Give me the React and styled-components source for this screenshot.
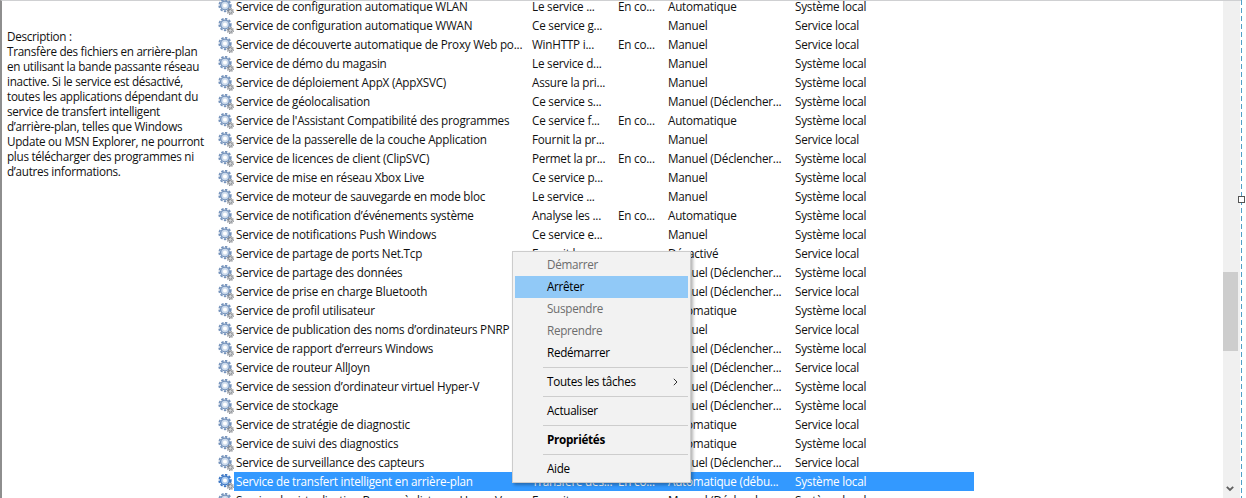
import React from 'react';
import styled, { createGlobalStyle } from 'styled-components';

const GlobalStyle = createGlobalStyle`
  html, body {
    margin: 0;
    padding: 0;
    background: #fff;
    overflow: hidden;
  }
  body {
    font-family: "Open Sans", "Noto Sans", sans-serif;
    font-size: 11.7px;
    letter-spacing: -0.22px;
    color: #111;
  }
`;

const Page = styled.div`
  position: relative;
  display: flex;
  width: 1246px;
  height: 498px;
  overflow: hidden;
  background: #fff;
`;

const Window = styled.div`
  flex: 1;
  display: flex;
  min-width: 0;
  border-top: 1px solid #cfd0d2;
  border-left: 2px solid #8e8e8e;
`;

const Description = styled.aside`
  width: 207px;
  flex-shrink: 0;
  padding: 28px 4px 0 5px;
  line-height: 15px;
  letter-spacing: -0.29px;
`;

const List = styled.div`
  flex: 1;
  min-width: 0;
  margin-top: -4px;
`;

const Row = styled.div`
  display: flex;
  height: 19px;
  align-items: center;
`;

const Cells = styled.div`
  display: grid;
  grid-template-columns: 296px 86px 50px 127px 179px;
  width: 738px;
  height: 19px;
  line-height: 19px;
  padding-left: 2px;
  white-space: nowrap;
  background: ${p => (p.$selected ? '#3399ff' : 'transparent')};
  color: ${p => (p.$selected ? '#fff' : '#111')};
`;

const GearSvg = styled.svg`
  width: 16px;
  height: 16px;
  flex-shrink: 0;
`;

const ServiceIcon = ({ selected }) => {
  const main = selected ? '#3b76c4' : '#7492bb';
  const inner = selected ? '#a9c9ee' : '#c9d8ea';
  return (
    <GearSvg viewBox="0 0 16 16">
      <circle cx="7" cy="6.5" r="5.8" fill="none" stroke={main} strokeWidth="1.7" strokeDasharray="2.4 1.4" />
      <circle cx="7" cy="6.5" r="4.4" fill={inner} stroke={main} strokeWidth="1.4" />
      <circle cx="7" cy="6.5" r="2" fill="#fff" />
      <circle cx="12.4" cy="12.4" r="3" fill="none" stroke="#84888d" strokeWidth="1.2" strokeDasharray="1.3 1" />
      <circle cx="12.4" cy="12.4" r="1.9" fill="#d0d3d7" stroke="#777b80" strokeWidth="0.9" />
    </GearSvg>
  );
};

const Scrollbar = styled.div`
  position: relative;
  width: 17px;
  flex-shrink: 0;
  margin-right: 1px;
  padding-top: 271px;
  box-sizing: border-box;
  background: #f0f0f0;
`;

const Thumb = styled.div`
  width: 15px;
  height: 79px;
  background: #cdcdcd;
`;

const ScrollArrow = styled.svg`
  position: absolute;
  left: 3px;
  bottom: 6px;
  width: 8px;
  height: 6px;
`;

const SelectionEdge = styled.div`
  position: relative;
  width: 1px;
  margin-right: 4px;
  flex-shrink: 0;
  background: repeating-linear-gradient(#4f9fc8 0 5px, transparent 5px 8px);
`;

const Handle = styled.div`
  position: absolute;
  left: -3px;
  top: 196px;
  width: 5px;
  height: 5px;
  background: #fff;
  border: 1px solid #555;
`;

const Menu = styled.div`
  position: absolute;
  left: 512px;
  top: 251px;
  width: 179px;
  box-sizing: border-box;
  padding: 2px;
  background: #f2f2f2;
  border: 1px solid #cccccc;
  box-shadow: 2px 2px 3px rgba(0, 0, 0, 0.3);
  letter-spacing: -0.29px;
`;

const MenuItem = styled.div`
  position: relative;
  height: 22px;
  line-height: 21px;
  padding-left: 32px;
  background: ${p => (p.$hover ? '#91c9f7' : 'transparent')};
  color: ${p => (p.$disabled ? '#6d6d6d' : '#000')};
  font-weight: ${p => (p.$bold ? 700 : 400)};
`;

const Separator = styled.div`
  height: 1px;
  margin: 3px 0 3px 28px;
  background: #cdcdcd;
`;

const SubArrow = styled.svg`
  position: absolute;
  right: 10px;
  top: 7px;
  width: 5px;
  height: 8px;
`;

const LS = 'Service local';
const SL = 'Système local';
const MD = 'Manuel (Déclencher...';
const EC = 'En co...';

const services = [
  ['Service de configuration automatique WLAN', 'Le service ...', EC, 'Automatique', SL],
  ['Service de configuration automatique WWAN', 'Ce service g...', '', 'Manuel', LS],
  ['Service de découverte automatique de Proxy Web po...', 'WinHTTP i...', EC, 'Manuel', LS],
  ['Service de démo du magasin', 'Le service d...', '', 'Manuel', SL],
  ['Service de déploiement AppX (AppXSVC)', 'Assure la pri...', '', 'Manuel', SL],
  ['Service de géolocalisation', 'Ce service s...', '', MD, SL],
  ["Service de l'Assistant Compatibilité des programmes", 'Ce service f...', EC, 'Automatique', SL],
  ['Service de la passerelle de la couche Application', 'Fournit la pr...', '', 'Manuel', LS],
  ['Service de licences de client (ClipSVC)', 'Permet la pr...', EC, MD, SL],
  ['Service de mise en réseau Xbox Live', 'Ce service p...', '', 'Manuel', SL],
  ['Service de moteur de sauvegarde en mode bloc', 'Le service ...', '', 'Manuel', SL],
  ['Service de notification d’événements système', 'Analyse les ...', EC, 'Automatique', SL],
  ['Service de notifications Push Windows', 'Ce service e...', '', 'Manuel', SL],
  ['Service de partage de ports Net.Tcp', 'Fournit la...', '', 'Désactivé', LS],
  ['Service de partage des données', '', '', MD, SL],
  ['Service de prise en charge Bluetooth', '', '', MD, LS],
  ['Service de profil utilisateur', '', '', 'Automatique', SL],
  ['Service de publication des noms d’ordinateurs PNRP', '', '', 'Manuel', LS],
  ['Service de rapport d’erreurs Windows', '', '', MD, SL],
  ['Service de routeur AllJoyn', '', '', MD, LS],
  ['Service de session d’ordinateur virtuel Hyper-V', '', '', MD, SL],
  ['Service de stockage', '', '', MD, SL],
  ['Service de stratégie de diagnostic', '', '', 'Automatique', LS],
  ['Service de suivi des diagnostics', '', '', 'Automatique', SL],
  ['Service de surveillance des capteurs', '', '', MD, LS],
  ['Service de transfert intelligent en arrière-plan', 'Transfère des...', EC, 'Automatique (débu...', SL],
  ['Service de virtualisation Bureau à distance Hyper-V', 'Fournit un...', '', MD, SL],
];

const descriptionLines = [
  'Transfère des fichiers en arrière-plan',
  'en utilisant la bande passante réseau',
  'inactive. Si le service est désactivé,',
  'toutes les applications dépendant du',
  'service de transfert intelligent',
  'd’arrière-plan, telles que Windows',
  'Update ou MSN Explorer, ne pourront',
  'plus télécharger des programmes ni',
  'd’autres informations.',
];

export default function App() {
  return (
    <Page>
      <GlobalStyle />
      <Window>
        <Description>
          <div>Description :</div>
          {descriptionLines.map(line => (
            <div key={line}>{line}</div>
          ))}
        </Description>
        <List>
          {services.map((row, i) => (
            <Row key={row[0]}>
              <ServiceIcon selected={i === 25} />
              <Cells $selected={i === 25}>
                {row.map((cell, j) => (
                  <span key={j}>{cell}</span>
                ))}
              </Cells>
            </Row>
          ))}
        </List>
        <Scrollbar>
          <Thumb />
          <ScrollArrow viewBox="0 0 8 6">
            <path d="M0.8 0.8 L4 4 L7.2 0.8" fill="none" stroke="#5f5f5f" strokeWidth="1.8" />
          </ScrollArrow>
        </Scrollbar>
      </Window>
      <SelectionEdge>
        <Handle />
      </SelectionEdge>
      <Menu>
        <MenuItem $disabled>Démarrer</MenuItem>
        <MenuItem $hover>Arrêter</MenuItem>
        <MenuItem $disabled>Suspendre</MenuItem>
        <MenuItem $disabled>Reprendre</MenuItem>
        <MenuItem>Redémarrer</MenuItem>
        <Separator />
        <MenuItem>
          Toutes les tâches
          <SubArrow viewBox="0 0 5 8">
            <path d="M0.8 0.8 L4 4 L0.8 7.2" fill="none" stroke="#333" strokeWidth="1" />
          </SubArrow>
        </MenuItem>
        <Separator />
        <MenuItem>Actualiser</MenuItem>
        <Separator />
        <MenuItem $bold>Propriétés</MenuItem>
        <Separator />
        <MenuItem>Aide</MenuItem>
      </Menu>
    </Page>
  );
}
